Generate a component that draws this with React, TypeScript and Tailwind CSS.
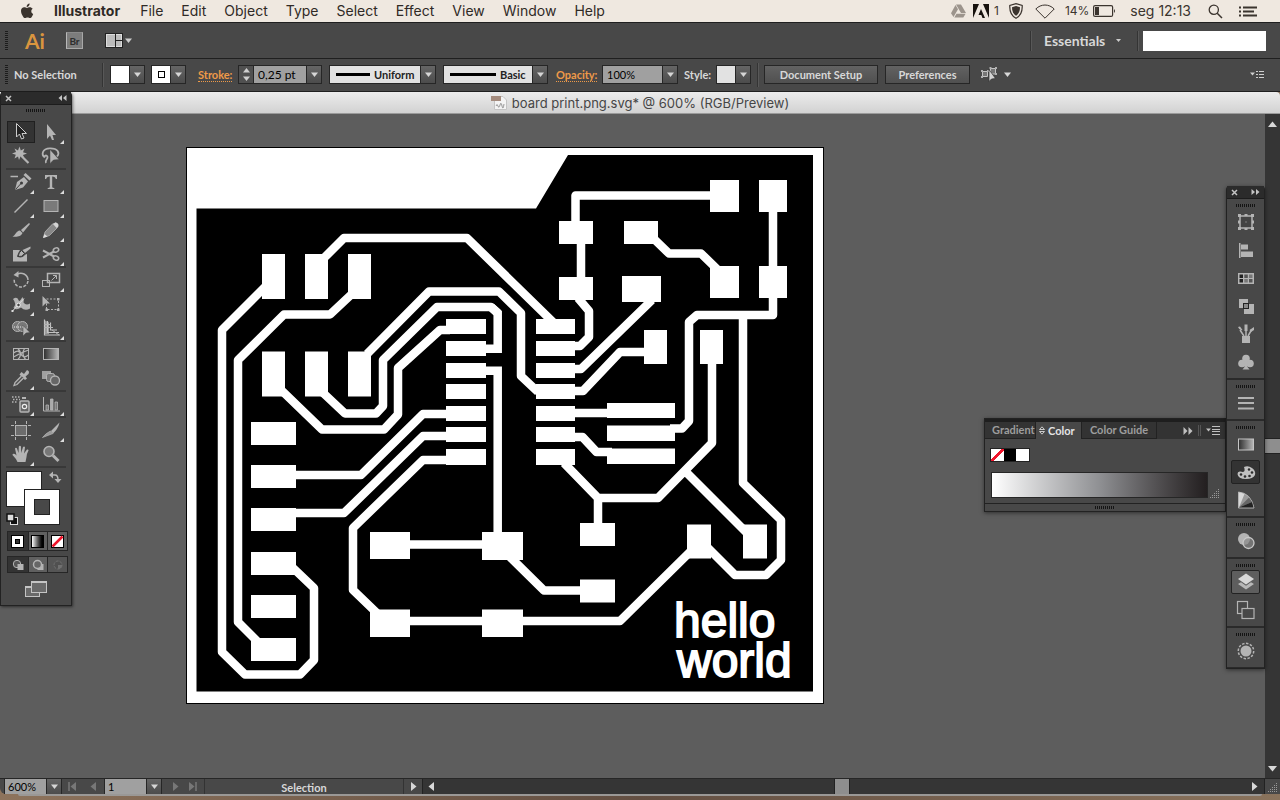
import { useState, type ReactNode } from "react";

/* ---------- small shared pieces ---------- */

function VGrip() {
  return (
    <span className="h-5 w-[3px] shrink-0 bg-[repeating-linear-gradient(#1c1c1c_0px,#1c1c1c_1px,#4a4a4a_1px,#4a4a4a_2px)]" />
  );
}

function HGrip() {
  return (
    <span className="block h-[3px] w-5 bg-[repeating-linear-gradient(90deg,#141414_0px,#141414_1px,#4a4a4a_1px,#4a4a4a_2px)]" />
  );
}

function Caret({ className = "" }: { className?: string }) {
  return (
    <svg width="7" height="5" viewBox="0 0 7 5" className={className} aria-hidden="true">
      <path d="M0 0.5H7L3.5 5z" fill="currentColor" />
    </svg>
  );
}

function Arrow({ dir, bar = false }: { dir: "left" | "right" | "up" | "down"; bar?: boolean }) {
  const d = {
    left: "M8 1V10L2.5 5.5z",
    right: "M3 1V10L8.500 5.5z",
    up: "M1 8H10L5.500 2.500z",
    down: "M1 3H10L5.500 8.500z",
  }[dir];
  return (
    <svg width="11" height="11" viewBox="0 0 11 11" aria-hidden="true">
      <path d={d} fill="currentColor" />
      {bar && <path d={dir === "left" ? "M1 1V10" : "M10 1V10"} stroke="currentColor" strokeWidth="1.5" />}
    </svg>
  );
}

function DoubleChevron({ dir }: { dir: "left" | "right" }) {
  return (
    <svg width="9" height="6" viewBox="0 0 9 6" aria-hidden="true">
      <path
        d={dir === "left" ? "M4 0V6L0.500 3zM8.500 0V6L5 3z" : "M0.500 0V6L4 3zM5 0V6L8.500 3z"}
        fill="currentColor"
      />
    </svg>
  );
}

function PanelHeader({ dir }: { dir: "left" | "right" }) {
  return (
    <div className="flex h-[13px] items-center justify-between border-b border-[#1c1c1c] bg-[#2b2b2b] px-1 text-[#c4c4c4]">
      <button aria-label="Close panel">
        <svg width="7" height="7" viewBox="0 0 7 7" aria-hidden="true">
          <path d="M1 1L6 6M6 1L1 6" stroke="currentColor" strokeWidth="1.500" />
        </svg>
      </button>
      <button aria-label="Collapse panel">
        <DoubleChevron dir={dir} />
      </button>
    </div>
  );
}

function DropButton({ label }: { label: string }) {
  return (
    <button
      aria-label={label}
      className="flex w-[15px] shrink-0 items-center justify-center border-l border-[#262626] bg-linear-to-b from-[#656565] to-[#4c4c4c] text-[#d6d6d6]"
    >
      <Caret />
    </button>
  );
}

function Divider() {
  return <span className="h-6 w-[2px] shrink-0 border-l border-[#343434] bg-[#585858]" />;
}

/* ---------- system menu bar ---------- */

const MENUS = ["File", "Edit", "Object", "Type", "Select", "Effect", "View", "Window", "Help"];

function MenuBar() {
  return (
    <header className="flex h-[22px] shrink-0 items-center justify-between bg-[#efe8e0] font-[Inter,sans-serif] text-[14px] leading-5 text-[#2f2a26]">
      <nav className="flex items-center pl-5">
        <button aria-label="Apple menu" className="mr-5">
          <svg width="14" height="16" viewBox="0 0 14 16" fill="#3b342e" aria-hidden="true">
            <path d="M9.600 0.500C9.700 1.700 9.200 2.500 8.700 3.100 8.200 3.700 7.400 4.100 6.700 4 6.600 2.900 7 2.100 7.500 1.600 8 1 8.900 0.600 9.600 0.500zM12.700 5.800C11.800 6.400 11.300 7.200 11.300 8.300 11.300 9.600 12.100 10.500 13.200 11 12.900 11.900 12.500 12.700 12 13.400 11.400 14.300 10.800 15 9.900 15 9.100 15 8.700 14.500 7.500 14.500 6.400 14.500 5.900 15 5.100 15 4.200 15 3.600 14.300 3 13.400 1.800 11.700 1 9.700 1 7.800 1 5.500 2.500 4.200 4.200 4.200 5.300 4.200 6.200 4.900 7 4.900 7.700 4.900 8.500 4.200 9.800 4.200 10.900 4.200 12 4.700 12.700 5.800z" />
          </svg>
        </button>
        <button className="mr-5 font-bold">Illustrator</button>
        <span className="flex gap-[18px]">
          {MENUS.map((m) => (
            <button key={m}>{m}</button>
          ))}
        </span>
      </nav>
      <div className="flex items-center pr-[22px] text-[#3b342e]">
        <svg width="15" height="14" viewBox="0 0 15 14" className="mr-[7px]" aria-hidden="true">
          <path d="M5 0.500H10L15 9H10zM4.500 1L7 5.200 2.500 13 0 9.200zM5.500 9.800H14.600L12.300 13.500H3.300z" fill="#9c948c" />
        </svg>
        <svg width="16" height="14" viewBox="0 0 16 14" className="mr-[5px]" aria-hidden="true">
          <path d="M0 0H6L0 14zM10 0H16V14zM8 5L12 14H9.500L8.300 11H5.500z" fill="#17120e" />
        </svg>
        <span className="mr-[10px] text-[12px]">1</span>
        <svg width="14" height="16" viewBox="0 0 14 16" className="mr-3" aria-hidden="true">
          <path d="M7 0.700L13.200 2.500C13.500 8 11.500 13 7 15.300 2.500 13 0.500 8 0.800 2.500z" fill="none" stroke="#3b342e" strokeWidth="1.200" />
          <path d="M7 3L11 4.200C11 8 9.800 11 7 12.800 4.200 11 3 8 3 4.200z" fill="#3b342e" />
        </svg>
        <svg width="20" height="15" viewBox="0 0 20 15" className="mr-[10px]" aria-hidden="true">
          <path d="M0.800 5C6 -0.300 14 -0.300 19.200 5L10 14.200z" fill="none" stroke="#3b342e" strokeWidth="1" />
        </svg>
        <span className="mr-1 text-[12px]">14%</span>
        <svg width="23" height="12" viewBox="0 0 23 12" className="mr-[14px]" aria-hidden="true">
          <rect x="0.600" y="0.600" width="19" height="10.800" rx="1.500" fill="none" stroke="#3b342e" strokeWidth="1.200" />
          <rect x="2" y="2" width="4" height="8" fill="#3b342e" />
          <path d="M21 4Q23 6 21 8z" fill="#3b342e" />
        </svg>
        <span className="mr-[17px]">seg 12:13</span>
        <button aria-label="Search" className="mr-4">
          <svg width="15" height="15" viewBox="0 0 15 15" aria-hidden="true">
            <circle cx="5.800" cy="5.800" r="4.600" fill="none" stroke="#3b342e" strokeWidth="1.300" />
            <path d="M9.200 9.200L14 14" stroke="#3b342e" strokeWidth="1.500" />
          </svg>
        </button>
        <button aria-label="Notification center">
          <svg width="19" height="11" viewBox="0 0 19 11" aria-hidden="true">
            <path d="M0 1.500H2M0 5.500H2M0 9.500H2M4 1.500H18M4 5.500H15M4 9.500H18" stroke="#3b342e" strokeWidth="1.800" />
          </svg>
        </button>
      </div>
    </header>
  );
}

/* ---------- application bar ---------- */

function AppBar() {
  return (
    <div className="flex h-[37px] shrink-0 items-center justify-between border-t border-b border-[#1f1f1f] bg-[#484848]">
      <div className="flex items-center pl-[5px]">
        <VGrip />
        <span className="ml-[17px] w-[19px] text-[21px] leading-6 font-bold text-[#d9953f]">Ai</span>
        <button
          aria-label="Go to Bridge"
          className="ml-[22px] flex h-[17px] w-[17px] items-center justify-center border border-t-[#8a8a8a] border-r-[#a8a8a8] border-b-[#a8a8a8] border-l-[#b8b8b8] bg-[#7c7c7c] text-[10px] leading-3 font-bold text-[#2d2d2d]"
        >
          Br
        </button>
        <button aria-label="Arrange documents" className="ml-[22px] flex items-center gap-[2px] text-[#cfcfcf]">
          <svg width="18" height="15" viewBox="0 0 18 15" aria-hidden="true">
            <rect x="0.500" y="0.500" width="17" height="14" fill="#222" stroke="#222" />
            <rect x="1.500" y="1.500" width="15" height="12" fill="#bcbcbc" stroke="#ddd" />
            <path d="M10.500 1V14M10.500 7.500H17" stroke="#222" />
          </svg>
          <Caret />
        </button>
      </div>
      <div className="flex items-center pr-[14px]">
        <span className="h-5 w-[2px] border-l border-[#343434] bg-[#585858]" />
        <button className="mr-4 ml-3 flex w-[77px] items-center justify-between text-[14px] leading-4 font-bold text-[#d8d8d8]">
          Essentials
          <svg width="5" height="3" viewBox="0 0 5 3" aria-hidden="true">
            <path d="M0 0H5L2.500 3z" fill="#ccc" />
          </svg>
        </button>
        <span className="h-5 w-[2px] border-l border-[#343434] bg-[#585858]" />
        <input aria-label="Search help" className="ml-1 h-5 w-[123px] bg-white px-1 text-[11px] text-black outline-none" />
      </div>
    </div>
  );
}

/* ---------- control bar ---------- */

function Swatch({ label, kind }: { label: string; kind: "fill" | "stroke" | "style" }) {
  return (
    <span className="flex h-[19px] w-[35px] shrink-0 border border-[#262626]">
      <button
        aria-label={label}
        className={`flex flex-1 items-center justify-center ${kind === "style" ? "bg-[#e2e2e2]" : "bg-white"}`}
      >
        {kind === "stroke" && <span className="h-[7px] w-[7px] border border-black bg-white" />}
      </button>
      <DropButton label={`${label} options`} />
    </span>
  );
}

function StrokeSelect({
  label,
  options,
  line,
  width,
}: {
  label: string;
  options: string[];
  line: number;
  width: string;
}) {
  return (
    <span className={`flex h-[19px] shrink-0 border border-[#262626] bg-[#e2e2e2] ${width}`}>
      <svg width={line} height="17" className="ml-[6px] shrink-0" aria-hidden="true">
        <path d={`M0 8.500H${line}`} stroke="#000" strokeWidth="3" />
      </svg>
      <select
        aria-label={label}
        defaultValue={options[0]}
        className="min-w-0 flex-1 appearance-none bg-transparent pl-1 text-[11px] leading-4 font-bold text-[#222] outline-none"
      >
        {options.map((o) => (
          <option key={o}>{o}</option>
        ))}
      </select>
      <DropButton label={`${label} list`} />
    </span>
  );
}

function ControlBar() {
  return (
    <div className="flex h-[33px] shrink-0 items-center border-b border-[#1f1f1f] bg-[#484848] pb-px text-[11px] leading-4 font-bold whitespace-nowrap text-[#d8d8d8]">
      <div className="flex flex-1 items-center pl-[5px]">
        <VGrip />
        <span className="ml-[6px] w-[88px]">No Selection</span>
        <Divider />
        <span className="ml-[6px] flex items-center gap-[6px]">
          <Swatch label="Fill" kind="fill" />
          <Swatch label="Stroke color" kind="stroke" />
        </span>
        <label htmlFor="stroke" className="ml-3 w-10 text-[#ef9a48]">
          <span className="border-b border-dotted border-[#ef9a48]">Stroke:</span>
        </label>
        <span className="flex h-[19px] w-21 border border-[#262626] bg-[#a0a0a0]">
          <span className="flex w-[15px] flex-col items-center border-r border-[#262626] bg-[#505050] text-[#d0d0d0]">
            <button aria-label="Increase stroke" className="flex flex-1 items-center">
              <Caret className="rotate-180" />
            </button>
            <button aria-label="Decrease stroke" className="flex flex-1 items-center">
              <Caret />
            </button>
          </span>
          <input id="stroke" defaultValue="0,25 pt" className="min-w-0 flex-1 bg-transparent px-1 text-[12px] font-normal text-black outline-none" />
          <DropButton label="Stroke weights" />
        </span>
        <span className="ml-[7px] flex gap-[7px]">
          <StrokeSelect label="Width profile" options={["Uniform", "Tapered"]} line={34} width="w-[107px]" />
          <StrokeSelect label="Brush" options={["Basic", "Charcoal"]} line={46} width="w-[105px]" />
        </span>
        <label htmlFor="opacity" className="ml-2 w-[46px] text-[#ef9a48]">
          <span className="border-b border-dotted border-[#ef9a48]">Opacity:</span>
        </label>
        <span className="flex h-[19px] w-[76px] border border-[#262626] bg-[#a0a0a0]">
          <input id="opacity" defaultValue="100%" className="min-w-0 flex-1 bg-transparent px-1 text-[11px] font-normal text-black outline-none" />
          <DropButton label="Opacity values" />
        </span>
        <span className="ml-[6px] w-8">Style:</span>
        <Swatch label="Graphic style" kind="style" />
        <span className="w-[6px]" />
        <Divider />
        <button className="ml-[5px] h-[19px] w-[114px] border border-[#262626] bg-linear-to-b from-[#626262] to-[#505050]">
          Document Setup
        </button>
        <button className="ml-[7px] h-[19px] w-[85px] border border-[#262626] bg-linear-to-b from-[#626262] to-[#505050]">
          Preferences
        </button>
        <button aria-label="Select similar objects" className="ml-[11px] flex items-center gap-[7px]">
          <svg width="16" height="16" viewBox="0 0 16 16" aria-hidden="true">
            <path d="M1.500 4.500H6.500V9.500H1.500z" fill="#777" stroke="#c4c4c4" />
            <path d="M9.500 1.500H14.500V7H9.500z" fill="#777" stroke="#c4c4c4" />
            <path d="M0 3h2v2H0zM0 9h2v2H0zM6 3h2v2H6zM8.500 0h2v2h-2zM14 0h2v2h-2zM14 6h2v2h-2z" fill="#b0b0b0" />
            <path d="M8 2.500V14.500L10.500 12L14.500 11.500z" fill="#d4d4d4" stroke="#333" strokeWidth="0.700" />
          </svg>
          <Caret />
        </button>
      </div>
      <button aria-label="Control panel menu" className="mr-4">
        <svg width="14" height="9" viewBox="0 0 14 9" aria-hidden="true">
          <path d="M0 2.500H5L2.500 5.500z" fill="#d0d0d0" />
          <path d="M6 1.500H8M6 4.500H8M6 7.500H8M9 1.500H14M9 4.500H14M9 7.500H14" stroke="#d0d0d0" />
        </svg>
      </button>
    </div>
  );
}

/* ---------- tools ---------- */

const G = "#b4b4b4";

const TOOL_ICONS: Record<string, ReactNode> = {
  Selection: <path d="M7.500 3.500V17L10.500 14L12.500 19L15 18L13 13.500H17.500z" fill="#222" stroke="#ccc" />,
  "Direct Selection": <path d="M8 4V19L11 15.500L13 20H15L13.500 15H17z" fill={G} />,
  "Magic Wand": (
    <g>
      <path d="M10.500 2.500L11.800 6.500L15.500 4.500L14 8.200L18 9.500L14 11L15 14L11.500 12.500L10 16L9 12.500L5.500 14.500L6.800 10.800L3 9.500L7 8L5.500 4.500L9 6.500z" fill={G} />
      <path d="M12.500 12L19.500 19" stroke={G} strokeWidth="2.200" />
    </g>
  ),
  Lasso: (
    <g>
      <path d="M6 13.500C2 11 3 4.500 11 4.300C19 4.200 21 9 18 12.500M6 13.500C4.500 11.500 8 10.500 8.500 13S5.500 16 7 19" fill="none" stroke={G} strokeWidth="1.800" />
      <path d="M11 5.500V19.500L14.500 16L20 15.500z" fill={G} stroke="#444" strokeWidth="0.500" />
    </g>
  ),
  Pen: (
    <g>
      <path d="M1.500 6.500H9" stroke={G} strokeWidth="1.500" />
      <path d="M6 20L8 12L15 7L19 11.500L14 17.500z" fill={G} />
      <path d="M15.500 4L21.500 9.500" stroke={G} strokeWidth="3" />
      <path d="M6.500 19.500L12 13.500" stroke="#3c3c3c" />
      <circle cx="12.500" cy="13" r="1.500" fill="#3c3c3c" />
    </g>
  ),
  Type: <path d="M6 5H18V9H16.800Q16.500 6.500 13.200 6.500V17Q13.200 18 15.300 18V19H8.700V18Q10.800 18 10.800 17V6.500Q7.500 6.500 7.200 9H6z" fill={G} />,
  "Line Segment": <path d="M5.500 18.500L18.500 5.500" stroke={G} strokeWidth="1.500" />,
  Rectangle: <rect x="5" y="6.500" width="14" height="11" fill="#7a7a7a" stroke={G} />,
  Paintbrush: (
    <g>
      <path d="M20 5L12 12L14 14.500L21 6z" fill={G} />
      <path d="M11 12.500L13.500 15C12 19 7 19 3.500 18.500C6.500 17.500 7 13 11 12.500z" fill={G} />
    </g>
  ),
  Pencil: (
    <g>
      <path d="M4.500 19.500L6 14L14 5.500L18.500 9.500L10.500 17.500z" fill="#888" stroke={G} strokeWidth="0.800" />
      <path d="M14 6L16.500 4.200Q20.500 5.500 19.300 8.500L17.700 10z" fill="#d4d4d4" />
      <path d="M4 20L5.500 16L8.500 18.500z" fill="#ddd" />
    </g>
  ),
  "Blob Brush": (
    <g>
      <path d="M4 8H11Q9 11 8 14.500Q13 17 16.500 12.500L18 12V19.500H4z" fill={G} />
      <path d="M21.500 4.500L13.500 8L16 11L21.500 6.500z" fill={G} />
      <path d="M12.500 8.500L15.500 11.500Q13 15.500 9 14.500Q10 10 12.500 8.500z" fill={G} stroke="#3a3a3a" />
    </g>
  ),
  Scissors: (
    <g fill="none" stroke={G} strokeWidth="1.500">
      <ellipse cx="17" cy="8" rx="2.800" ry="2" transform="rotate(-25 17 8)" />
      <ellipse cx="17" cy="16" rx="2.800" ry="2" transform="rotate(25 17 16)" />
      <path d="M15 9.500L4 15.500M15 14.500L4 8.500" strokeWidth="2" />
    </g>
  ),
  Rotate: (
    <g>
      <path d="M8 6.500A7 7 0 0 1 19 12" fill="none" stroke={G} strokeWidth="1.500" />
      <path d="M19 13A7 7 0 0 1 5.500 14.500L5 11" fill="none" stroke={G} strokeWidth="1.500" strokeDasharray="3 1.500" />
      <path d="M9.500 3V9.500L4.500 7z" fill={G} />
    </g>
  ),
  Scale: (
    <g fill="none" stroke={G}>
      <rect x="8.500" y="5.500" width="12" height="9" strokeWidth="1.500" />
      <rect x="3.500" y="12.500" width="7" height="6" />
      <path d="M12.500 12.500L17.500 7.500M14 7.500H17.500V11" />
    </g>
  ),
  Width: (
    <g>
      <path d="M4 7Q8 4 9.500 8Q10 10 11.500 8L13.500 5Q15.500 8 14.500 10.500Q17 14 21 11.500V16.500Q16 19.500 12 15.500Q7 19 4.500 15.500Q8 12 4 7z" fill={G} />
      <path d="M3.500 19L15 6.500" stroke="#ddd" />
      <circle cx="9.500" cy="13" r="1.800" fill="#444" stroke="#eee" />
      <rect x="2.500" y="18" width="2" height="2" fill="#ddd" />
    </g>
  ),
  "Free Transform": (
    <g>
      <rect x="7.500" y="7" width="12" height="10.500" fill="none" stroke={G} strokeDasharray="2 1.500" />
      <path d="M3.500 4V14.500L6.500 11.500H11z" fill={G} />
      <path d="M6.500 16.500h2.500v2.500h-2.500zM18 16.500h2.500v2.500H18zM18 6h2.500v2.500H18z" fill={G} />
    </g>
  ),
  "Shape Builder": (
    <g>
      <circle cx="8.500" cy="10.500" r="5" fill="#777" stroke={G} />
      <circle cx="13.500" cy="10.500" r="5" fill="#777" stroke={G} />
      <path d="M5 11H15" stroke="#eee" strokeDasharray="1 1" />
      <path d="M14 9.500V20L17 17L21 16.500z" fill={G} stroke="#444" strokeWidth="0.500" />
    </g>
  ),
  "Perspective Grid": (
    <g>
      <path d="M5 4L10 6.500V18H5z" fill="#999" />
      <path d="M5.500 3.500V19H21M8.500 5V16.500H20M11.500 6.500V14H18" stroke="#c4c4c4" fill="none" strokeWidth="1.200" />
      <path d="M5 11.500H14M5 8.500H12M13 14L20 19" stroke={G} />
    </g>
  ),
  Mesh: (
    <g fill="none" stroke={G}>
      <rect x="4.500" y="6.500" width="15" height="11" />
      <path d="M4.500 11Q10 7 12 12T19.500 13M9 6.500Q14 12 9 17.500M15.500 6.500Q12 12 16.500 17.500M4.500 15L12 11L19.500 8" strokeWidth="1.300" />
    </g>
  ),
  Gradient: <rect x="4.500" y="6.500" width="15" height="11" fill="url(#greyRamp)" stroke={G} />,
  Eyedropper: (
    <g>
      <path d="M12.500 6L15 8L18 4Q21 5 19.500 8L16.500 10.500L18 12.500L16 14L10.500 8.500z" fill={G} />
      <path d="M12.500 10L6 16.500L5 19.500L8 18.500L14.500 12" fill="#555" stroke={G} strokeWidth="1.300" />
    </g>
  ),
  Blend: (
    <g>
      <rect x="3" y="5" width="9" height="8" fill="#a0a0a0" />
      <rect x="7.500" y="7.500" width="8" height="8" rx="2" fill="#777" stroke={G} />
      <circle cx="16" cy="14.500" r="4.500" fill="#666" stroke={G} strokeWidth="1.300" />
    </g>
  ),
  "Symbol Sprayer": (
    <g>
      <path d="M3 5H12M4 7.500H11M3 10H9" stroke={G} strokeWidth="1.500" strokeDasharray="1.500 1.500" />
      <path d="M13 5H17V7H13z" fill={G} />
      <rect x="11" y="9" width="9" height="11" rx="1" fill="#666" stroke={G} strokeWidth="1.500" />
      <circle cx="15.500" cy="14.500" r="2.200" fill="none" stroke="#eee" strokeWidth="1.200" />
    </g>
  ),
  "Column Graph": (
    <g>
      <path d="M4.500 5V19H21" fill="none" stroke={G} />
      <path d="M7 13H9.500V18H7zM16 10H18.500V18H16z" fill="#777" stroke={G} strokeWidth="0.800" />
      <path d="M11.500 7H14V18H11.500z" fill="#aaa" stroke={G} strokeWidth="0.800" />
    </g>
  ),
  Artboard: (
    <g>
      <rect x="6.500" y="7.500" width="11" height="10" fill="#6c6c6c" stroke={G} />
      <path d="M2 7.500H5M19 7.500H22M2 17.500H5M19 17.500H22M6.500 3V6M17.500 3V6M6.500 19V22M17.500 19V22" stroke={G} />
    </g>
  ),
  Slice: (
    <g>
      <path d="M20.500 4.500L12 13L14 15.500Q19 11 20.500 4.500z" fill={G} />
      <path d="M11.500 13L14 15.500L10 17L3.500 19.500Q7 15 11.500 13z" fill="#999" stroke={G} strokeWidth="0.700" />
    </g>
  ),
  Hand: (
    <path d="M8.500 20Q7 16.500 3.500 13Q3.500 11 6 12L7.500 13.500L6 6.500Q7 5 8 6.500L9.500 11L9.800 4.500Q11 3 12 4.500L12.200 11L14 5Q15.500 4 16 5.500L15 11.500L18 7.500Q19.500 7 19.500 8.500Q17.500 12 17.500 15L16.500 20z" fill={G} />
  ),
  Zoom: (
    <g>
      <circle cx="10" cy="9.500" r="5" fill="#777" stroke={G} strokeWidth="1.600" />
      <path d="M14 13.500L19.500 19" stroke={G} strokeWidth="3" />
    </g>
  ),
};

const TOOL_GROUPS: { name: string; more?: boolean }[][] = [
  [{ name: "Selection" }, { name: "Direct Selection", more: true }, { name: "Magic Wand" }, { name: "Lasso" }],
  [
    { name: "Pen", more: true },
    { name: "Type", more: true },
    { name: "Line Segment", more: true },
    { name: "Rectangle", more: true },
    { name: "Paintbrush" },
    { name: "Pencil", more: true },
    { name: "Blob Brush" },
    { name: "Scissors", more: true },
  ],
  [
    { name: "Rotate", more: true },
    { name: "Scale", more: true },
    { name: "Width", more: true },
    { name: "Free Transform" },
    { name: "Shape Builder", more: true },
    { name: "Perspective Grid", more: true },
  ],
  [{ name: "Mesh" }, { name: "Gradient" }, { name: "Eyedropper", more: true }, { name: "Blend" }],
  [
    { name: "Symbol Sprayer", more: true },
    { name: "Column Graph", more: true },
  ],
  [{ name: "Artboard" }, { name: "Slice", more: true }, { name: "Hand", more: true }, { name: "Zoom" }],
];

function NoneMark() {
  return (
    <svg width="13" height="13" viewBox="0 0 13 13" aria-hidden="true">
      <rect x="0.500" y="0.500" width="12" height="12" fill="#fff" stroke="#000" />
      <path d="M1.500 11.500L11.500 1.500" stroke="#f0142b" strokeWidth="2.500" />
    </svg>
  );
}

function Toolbox() {
  const [tool, setTool] = useState("Selection");
  return (
    <aside className="absolute top-0 left-0 w-[72px] rounded-t border border-t-0 border-[#222] bg-[#484848] pb-[7px] shadow-[1px_1px_3px_rgba(0,0,0,0.5)]">
      <PanelHeader dir="left" />
      <div className="flex h-[15px] justify-center pt-1">
        <HGrip />
      </div>
      {TOOL_GROUPS.map((group, i) => (
        <div key={i} className="mx-[5px] grid grid-cols-[30px_30px] border-b-2 border-[#383838]">
          {group.map((t) => (
            <button
              key={t.name}
              aria-label={`${t.name} Tool`}
              aria-pressed={tool === t.name}
              onClick={() => setTool(t.name)}
              className="relative flex h-6 items-center justify-center"
            >
              <span className={`flex h-[22px] w-7 items-center justify-center ${tool === t.name ? "border border-[#202020] bg-[#333]" : ""}`}>
                <svg width="24" height="24" viewBox="0 0 24 24" className="shrink-0" aria-hidden="true">
                  {TOOL_ICONS[t.name]}
                </svg>
              </span>
              {t.more && (
                <svg width="4" height="4" viewBox="0 0 4 4" className="absolute right-[2px] bottom-0" aria-hidden="true">
                  <path d="M4 0V4H0z" fill="#ddd" />
                </svg>
              )}
            </button>
          ))}
        </div>
      ))}
      <div className="flex justify-center pr-[2px]">
        <svg width="62" height="60" viewBox="4 468 62 60" role="img" aria-label="Fill and stroke">
          <rect x="6.500" y="471.500" width="35" height="35" fill="#fff" stroke="#222" />
          <rect x="24.500" y="489.500" width="35" height="35" fill="#fff" stroke="#222" />
          <rect x="34.500" y="499.500" width="15" height="15" fill="#484848" stroke="#222" />
          <path d="M52 475H55Q58 475 58 480" fill="none" stroke={G} strokeWidth="1.500" />
          <path d="M53 471.500V478.500L49 475zM54.500 479H61.500L58 483z" fill={G} />
          <rect x="10.500" y="517.500" width="7" height="7" fill="#111" stroke="#ddd" />
          <rect x="7" y="514" width="7" height="7" fill="#ddd" stroke="#111" strokeWidth="1.500" />
        </svg>
      </div>
      <div className="mx-[6px] mt-[3px] grid h-5 w-[61px] grid-cols-3 border border-[#262626]">
        <button aria-label="Color" className="flex items-center justify-center bg-[#333]">
          <svg width="13" height="13" viewBox="0 0 13 13" aria-hidden="true">
            <rect x="0.500" y="0.500" width="12" height="12" fill="#fff" stroke="#000" />
            <rect x="4.500" y="4.500" width="4" height="4" fill="#333" stroke="#000" />
          </svg>
        </button>
        <button aria-label="Gradient" className="flex items-center justify-center border-l border-[#262626] bg-[#606060]">
          <span className="h-[13px] w-[13px] border border-black bg-linear-to-r from-white to-black" />
        </button>
        <button aria-label="None" className="flex items-center justify-center border-l border-[#262626] bg-[#606060]">
          <NoneMark />
        </button>
      </div>
      <div className="mx-[6px] mt-[5px] grid h-[17px] w-[61px] grid-cols-3 border border-[#262626]">
        <button aria-label="Draw normal" className="flex items-center justify-center bg-[#333]">
          <svg width="12" height="12" viewBox="0 0 12 12" aria-hidden="true">
            <circle cx="5" cy="5" r="3.700" fill="#555" stroke={G} />
            <rect x="5.500" y="5" width="6" height="6" fill={G} />
          </svg>
        </button>
        <button aria-label="Draw behind" className="flex items-center justify-center border-l border-[#262626] bg-[#606060]">
          <svg width="12" height="12" viewBox="0 0 12 12" aria-hidden="true">
            <rect x="5.500" y="5" width="6" height="6" fill={G} />
            <circle cx="5.500" cy="5.500" r="4" fill="#666" stroke={G} strokeWidth="1.500" />
          </svg>
        </button>
        <button aria-label="Draw inside" disabled className="flex items-center justify-center border-l border-[#262626] bg-[#555]">
          <svg width="12" height="12" viewBox="0 0 12 12" aria-hidden="true">
            <circle cx="6" cy="6" r="4" fill="#505050" stroke="#707070" strokeDasharray="3 1" />
            <path d="M6 6H10A4 4 0 0 1 6 10z" fill="#707070" />
          </svg>
        </button>
      </div>
      <button aria-label="Screen mode" className="mx-auto mt-2 block">
        <svg width="22" height="17" viewBox="0 0 22 17" aria-hidden="true">
          <rect x="0.500" y="5.500" width="14" height="10" fill="#6a6a6a" stroke="#c4c4c4" />
          <rect x="6.500" y="0.500" width="15" height="11" fill="#6a6a6a" stroke="#c4c4c4" />
          <path d="M6.500 1.500H21.500M0.500 6.500H6" stroke="#c4c4c4" />
        </svg>
      </button>
    </aside>
  );
}

/* ---------- circuit board artwork ---------- */

const PADS: [number, number, number, number][] = [
  [262, 254, 23, 45], [305, 254, 23, 45], [348, 254, 23, 45],
  [262, 351.5, 23, 45], [305, 351.5, 23, 45], [348, 351.5, 23, 45],
  [251, 422, 45, 23], [251, 465, 45, 23], [251, 508, 45, 23],
  [251, 552, 45, 23], [251, 595, 45, 23], [251, 638, 45, 23],
  [446, 319, 40, 15], [446, 341, 40, 15], [446, 363, 40, 15], [446, 384, 40, 15],
  [446, 406, 40, 15], [446, 427, 40, 15], [446, 449, 40, 16],
  [536, 319, 39, 15], [536, 341, 39, 15], [536, 363, 39, 15], [536, 384, 39, 15],
  [536, 406, 39, 15], [536, 427, 39, 15], [536, 449, 39, 16],
  [710, 180, 29, 32], [759, 180, 28, 32], [710, 266, 29, 32], [759, 266, 28, 32],
  [559, 221, 34, 23], [624, 221, 34, 23], [559, 277, 34, 23], [622, 276, 39, 26],
  [644, 330, 23, 34], [700, 330, 23, 34],
  [607, 403, 68, 15], [607, 425.5, 68, 15.5], [607, 448.5, 68, 15.5],
  [580, 523, 35, 23], [580, 579.5, 35, 23],
  [687, 524.5, 24, 34], [743, 524.5, 24, 34],
  [482, 532, 41, 28], [482, 609.5, 41, 27.5], [370, 532, 40, 27], [370, 609.5, 40, 27.5],
];

const TRACES = [
  "M265 287L222 330V652L245 674.500H300L314 660V588L292 567",
  "M354 292L330 314.500H284L238 360V622L258 642",
  "M322 260L344 238H467L555 324",
  "M367 354L429 291.500H499L521 313V376L538 392",
  "M320 390L345 413.500H376L383 406V360L437 307H491L497.700 313",
  "M278 387L322 429.500H384L398 414.500V368L440 330H450",
  "M290 475H361L423 414H450",
  "M290 513H344L423 436H450",
  "M450 460H423L353 528V590L380 616",
  "M400 544.500H490M400 621H620L692 550",
  "M504 551L544 590.500H590",
  "M564 463L598 498H658L712 443V355M598 498V530M685 471L750 536",
  "M704 544L735 575H766L781 560V520L743 483V316",
  "M575.500 230V195.500H715M581 240V285",
  "M578 298L589 311V337L580 346H570",
  "M570 369H581L652 300",
  "M570 391H583L620 352H650",
  "M570 413H610M570 437H582.500L596.500 452H612",
  "M670 428.500H682L689 421V322L697 315H773V290M773 205V270",
  "M653 238L669 253.500H701L718 270",
];

function Board() {
  return (
    <svg width="638" height="557" viewBox="186 147 638 557" role="img" aria-label="Circuit board artwork" className="block max-w-none">
      <rect x="186.500" y="147.500" width="637" height="556" fill="#fff" stroke="#000" />
      <path d="M196.500 208.500H536L568 155H813V691.500H196.500z" fill="#000" />
      <g fill="none" stroke="#fff" strokeWidth="8.500" strokeLinecap="butt" strokeLinejoin="round">
        {TRACES.map((d) => (
          <path key={d} d={d} />
        ))}
        <path d="M491 307L497.700 313V348.700H480M480 370.700H497.700V540" strokeLinejoin="miter" />
      </g>
      <g fill="#fff">
        {PADS.map(([x, y, w, h]) => (
          <rect key={`${x}-${y}`} x={x} y={y} width={w} height={h} />
        ))}
      </g>
      <g fill="#fff" stroke="#fff" strokeWidth="1.800" fontSize="48" fontFamily="'Liberation Sans', Arial, sans-serif">
        <text x="674" y="637">hello</text>
        <text x="677" y="677">world</text>
      </g>
    </svg>
  );
}

/* ---------- right dock ---------- */

const DOCK: { name: string; icon: ReactNode; state?: "active" | "open" }[][] = [
  [
    {
      name: "Transform",
      icon: (
        <g>
          <rect x="4" y="4" width="12" height="12" fill="#444" stroke={G} strokeWidth="1.500" />
          <path d="M2 2h3v3H2zM8.500 2h3v2h-3zM15 2h3v3h-3zM2 15h3v3H2zM8.500 16h3v2h-3zM15 15h3v3h-3zM2 8.500h2v3H2zM16 8.500h2v3h-2zM9.500 9.500h1v1h-1z" fill={G} />
        </g>
      ),
    },
    { name: "Align", icon: <path d="M3 3H4.500V18H3zM5 4.500H12V9.500H5zM5 11.500H17V17H5z" fill={G} /> },
    {
      name: "Swatches",
      icon: (
        <g>
          <rect x="2" y="5" width="16" height="11" fill={G} />
          <path d="M3.500 6.500h3.500v3.500H3.500zM3.500 11h3.500v3.500H3.500z" fill="#222" />
          <path d="M8.300 6.500h3.500v3.500H8.300zM13 11h3.500v3.500H13z" fill="#555" />
          <path d="M13 6.500h3.500v3.500H13zM8.300 11h3.500v3.500H8.300z" fill="#777" />
        </g>
      ),
    },
    {
      name: "Pathfinder",
      icon: (
        <g>
          <path d="M3 3H12V12H3zM8 8H18V18H8z" fill={G} />
          <rect x="7.500" y="7.500" width="5" height="5" fill="#888" stroke="#222" />
        </g>
      ),
    },
    {
      name: "Brushes",
      icon: (
        <g>
          <path d="M6 12H14V19H6z" fill={G} />
          <path d="M8 12L4 6M10 12V4M12 12L15.500 6" stroke={G} strokeWidth="1.500" />
          <path d="M2 3Q3.500 7 6.500 6L4 2.500zM8.500 0.500h3V7h-3zM13.500 6L18 3V6L15 8z" fill={G} />
        </g>
      ),
    },
    {
      name: "Symbols",
      icon: (
        <g fill={G}>
          <circle cx="10" cy="6.500" r="3.800" />
          <circle cx="6" cy="11.500" r="3.800" />
          <circle cx="14" cy="11.500" r="3.800" />
          <path d="M9 9H11L11.500 15L13.500 17.500H6.500L8.500 15z" />
        </g>
      ),
    },
  ],
  [{ name: "Stroke", icon: <path d="M2 5H18M2 10H18M2 15.500H18" stroke={G} strokeWidth="2" /> }],
  [
    { name: "Gradient", icon: <rect x="2.500" y="5" width="15" height="11" fill="url(#greyRamp)" stroke="#c4c4c4" /> },
    {
      name: "Color",
      state: "active",
      icon: (
        <g>
          <path d="M8 5Q12 3 16 6Q20 9 19 13Q17 17 10 17Q2 17 1.500 12Q1.500 9 4.500 9.500Q7.500 10.500 8.500 9Q9 7.500 8 5z" fill="#c0c0c0" />
          <g fill="#2c2c2c">
            <circle cx="5" cy="12.500" r="1.300" />
            <circle cx="9" cy="14.500" r="1.300" />
            <circle cx="13.500" cy="14" r="1.300" />
            <circle cx="16" cy="10.500" r="1.300" />
            <circle cx="13" cy="7.500" r="1.200" />
          </g>
        </g>
      ),
    },
    {
      name: "Color Guide",
      icon: (
        <g>
          <path d="M2.500 2Q15 3 18 18H2.500z" fill="#9a9a9a" stroke={G} />
          <path d="M3 17.500V2.500Q6 2.700 8.500 4z" fill="#d8d8d8" />
          <path d="M3 17.500L13 7.500L16 12z" fill="#666" />
          <path d="M3 17.500L16 12L17.500 17.500z" fill="#222" />
        </g>
      ),
    },
  ],
  [
    {
      name: "Transparency",
      icon: (
        <g>
          <circle cx="8" cy="8" r="6" fill={G} />
          <circle cx="12.500" cy="12" r="5.500" fill="#888" fillOpacity="0.700" stroke="#c8c8c8" strokeWidth="1.300" />
        </g>
      ),
    },
  ],
  [
    {
      name: "Layers",
      state: "open",
      icon: (
        <g fill="#d8d8d8">
          <path d="M10 1.500L18 7L10 12.500L2 7z" />
          <path d="M2 12L5 10.200L10 13.800L15 10.200L18 12L10 17.500z" fill="#b8b8b8" />
        </g>
      ),
    },
    {
      name: "Artboards",
      icon: (
        <g fill="#484848" stroke={G} strokeWidth="1.200">
          <rect x="1.500" y="1.500" width="10" height="12" />
          <rect x="6" y="8.500" width="12" height="10" />
        </g>
      ),
    },
  ],
  [
    {
      name: "Appearance",
      icon: (
        <g>
          <circle cx="10" cy="10" r="5.500" fill={G} />
          <circle cx="10" cy="10" r="7.700" fill="none" stroke={G} strokeWidth="1.500" strokeDasharray="2.500 1.500" />
        </g>
      ),
    },
  ],
];

function Dock() {
  return (
    <aside className="absolute top-[94px] right-[15px] w-[39px] rounded-t border border-t-0 border-[#222] bg-[#484848] shadow-[0_1px_4px_rgba(0,0,0,0.5)]">
      <PanelHeader dir="right" />
      {DOCK.map((group, i) => (
        <div key={i} className="flex flex-col items-center border-b-2 border-[#2a2a2a] pb-[2px] last:border-b">
          <div className="flex h-[9px] items-end pb-px">
            <HGrip />
          </div>
          {group.map((p) => (
            <button
              key={p.name}
              aria-label={`${p.name} panel`}
              className="flex h-7 w-[30px] items-center justify-center"
            >
              <span
                className={`flex h-6 w-[29px] items-center justify-center rounded-xs ${
                  p.state === "active" ? "border border-[#222] bg-[#333]" : p.state === "open" ? "border border-[#222] bg-[#5e5e5e]" : ""
                }`}
              >
                <svg width="20" height="20" viewBox="0 0 20 20" aria-hidden="true">
                  {p.icon}
                </svg>
              </span>
            </button>
          ))}
        </div>
      ))}
    </aside>
  );
}

/* ---------- color panel ---------- */

function ColorPanel() {
  return (
    <section
      aria-label="Color"
      className="absolute top-[326px] right-[54px] w-[242px] border border-[#222] bg-[#484848] text-[11px] leading-4 font-bold text-[#9d9d9d] shadow-[0_1px_4px_rgba(0,0,0,0.5)]"
    >
      <div className="h-[3px] bg-[#1e1e1e]" />
      <div className="flex h-[17px] items-center justify-between bg-[#333] pr-[5px]">
        <div role="tablist" className="flex h-full">
          <button role="tab" aria-selected="false" className="w-[50px] overflow-hidden border-b border-[#222] pl-[7px] text-left">
            Gradient
          </button>
          <button role="tab" aria-selected="true" className="flex w-[47px] items-center gap-[3px] border-x border-[#222] bg-[#484848] pl-[3px] text-[#e4e4e4]">
            <svg width="6" height="9" viewBox="0 0 6 9" className="shrink-0" aria-hidden="true">
              <path d="M0.500 3.500L3 0.800L5.500 3.500zM0.500 5.500L3 8.200L5.500 5.500z" fill="none" stroke="#ccc" />
            </svg>
            Color
          </button>
          <button role="tab" aria-selected="false" className="w-[75px] border-r border-b border-[#222] text-center whitespace-nowrap">
            Color Guide
          </button>
        </div>
        <div className="flex items-center gap-[5px] text-[#c0c0c0]">
          <button aria-label="Collapse">
            <svg width="10" height="8" viewBox="0 0 10 8" aria-hidden="true">
              <path d="M0.500 0V8L4.500 4zM5.500 0V8L9.500 4z" fill="currentColor" />
            </svg>
          </button>
          <span className="h-[11px] w-[3px] border-x border-[#555]" />
          <button aria-label="Color panel menu">
            <svg width="14" height="9" viewBox="0 0 14 9" aria-hidden="true">
              <path d="M0 2.500H5L2.500 5.500z" fill="currentColor" />
              <path d="M6 0.500H14M6 3.500H14M6 5.500H14M6 8.500H14" stroke="currentColor" />
            </svg>
          </button>
        </div>
      </div>
      <div className="px-[5px] pt-[9px] pb-[5px]">
        <div className="flex w-10 border border-[#222]">
          <button aria-label="None" className="h-3 flex-1 bg-[linear-gradient(135deg,#fff_43%,#f0142b_43%,#f0142b_57%,#fff_57%)]" />
          <button aria-label="Black" className="h-3 flex-1 bg-black" />
          <button aria-label="White" className="h-3 flex-1 bg-white" />
        </div>
        <div className="mt-[10px] flex items-end justify-between">
          <button
            aria-label="Grayscale spectrum"
            className="ml-px h-[26px] w-[217px] border border-[#262626] bg-linear-to-r from-white via-[#8f9093] to-[#231f20]"
          />
          <ResizeDots />
        </div>
      </div>
      <div className="flex h-2 items-center justify-center border-t border-[#222]">
        <HGrip />
      </div>
    </section>
  );
}

function ResizeDots() {
  return (
    <svg width="10" height="10" viewBox="0 0 10 10" aria-hidden="true">
      <path d="M0 9.500H10M2 7.500H10M4 5.500H10M6 3.500H10M8 1.500H10" stroke="#999" strokeDasharray="1 1" />
    </svg>
  );
}

/* ---------- document window ---------- */

function DocumentTitle() {
  return (
    <div className="flex h-[22px] shrink-0 items-center justify-center gap-[5px] rounded-tr border-b border-[#9a9a9a] bg-linear-to-b from-[#ececec] to-[#d2d2d2] pt-px font-[Inter,sans-serif] text-[13px] leading-5 text-[#464646]">
      <svg width="16" height="14" viewBox="0 0 16 14" aria-hidden="true">
        <path d="M3.500 0.500H12L15.500 4V13.500H3.500z" fill="#f4f4f4" stroke="#c4c4c4" />
        <rect y="0" width="10" height="5" fill="#a58c7e" />
        <path d="M5 10Q6 7 7 10T9 9T11 10T13 8" fill="none" stroke="#999" />
      </svg>
      <span>board print.png.svg* @ 600% (RGB/Preview)</span>
    </div>
  );
}

function StatusBar() {
  return (
    <footer className="flex h-4 shrink-0 rounded-bl-md border-t border-[#262626] bg-[#484848] text-[11px] leading-[15px] text-[#d8d8d8]">
      <div className="flex w-[422px] shrink-0 items-stretch pl-1">
        <span className="flex w-[58px] border-x border-[#262626] bg-[#a0a0a0]">
          <input aria-label="Zoom level" defaultValue="600%" className="min-w-0 flex-1 bg-transparent pl-[3px] text-[11px] text-black outline-none" />
          <DropButton label="Zoom levels" />
        </span>
        <span className="flex w-[42px] items-center justify-center gap-[9px] text-[#777]">
          <button aria-label="First artboard" disabled><Arrow dir="left" bar /></button>
          <button aria-label="Previous artboard" disabled><Arrow dir="left" /></button>
        </span>
        <span className="flex w-[58px] border-x border-[#262626] bg-[#a0a0a0]">
          <input aria-label="Artboard" defaultValue="1" className="min-w-0 flex-1 bg-transparent pl-[3px] text-[11px] text-black outline-none" />
          <DropButton label="Artboards" />
        </span>
        <span className="flex w-[42px] items-center justify-center gap-[5px] text-[#777]">
          <button aria-label="Next artboard" disabled><Arrow dir="right" /></button>
          <button aria-label="Last artboard" disabled><Arrow dir="right" bar /></button>
        </span>
        <span className="flex-1 border-x border-[#333] pt-px text-center font-bold">Selection</span>
        <button aria-label="Status options" className="flex w-[18px] items-center justify-center"><Arrow dir="right" /></button>
      </div>
      <div className="flex flex-1 items-stretch border-l border-[#222] bg-[#353535]">
        <button aria-label="Scroll left" className="flex w-4 items-center justify-center"><Arrow dir="left" /></button>
        <span className="flex-[396]" />
        <span className="w-4 border-x border-[#222] bg-[#8e8e8e]" />
        <span className="flex-[397]" />
        <button aria-label="Scroll right" className="mr-[2px] flex w-4 items-center justify-center"><Arrow dir="right" /></button>
      </div>
      <div className="flex w-4 items-center justify-center border-l border-[#222]">
        <ResizeDots />
      </div>
    </footer>
  );
}

export default function App() {
  return (
    <div className="flex min-h-screen flex-col bg-linear-to-r from-[#8d735c] via-[#634f42] to-[#8a735c] font-[Lato,'Open_Sans',sans-serif] select-none">
      <svg width="0" height="0" className="absolute" aria-hidden="true">
        <defs>
          <linearGradient id="greyRamp">
            <stop offset="0" stopColor="#2e2e2e" />
            <stop offset="1" stopColor="#b8b8b8" />
          </linearGradient>
        </defs>
      </svg>
      <MenuBar />
      <AppBar />
      <ControlBar />
      <main className="relative flex flex-1 flex-col">
        <DocumentTitle />
        <div className="flex flex-1 bg-[#5d5d5d]">
          <div className="min-w-0 flex-1 overflow-hidden pt-[33px] pl-[186px]">
            <Board />
          </div>
          <div className="flex w-[15px] flex-col bg-[#353535] text-[#d8d8d8]">
            <button aria-label="Scroll up" className="flex h-5 items-center justify-center"><Arrow dir="up" /></button>
            <span className="flex-[304]" />
            <span className="h-4 border-y border-[#222] bg-[#8e8e8e]" />
            <span className="flex-[304]" />
            <button aria-label="Scroll down" className="flex h-5 items-center justify-center"><Arrow dir="down" /></button>
          </div>
        </div>
        <Toolbox />
        <ColorPanel />
        <Dock />
      </main>
      <StatusBar />
      <div className="h-[6px] shrink-0 px-[18px]">
        <div className="h-[2px] rounded-b bg-[#9a9896]" />
      </div>
    </div>
  );
}
